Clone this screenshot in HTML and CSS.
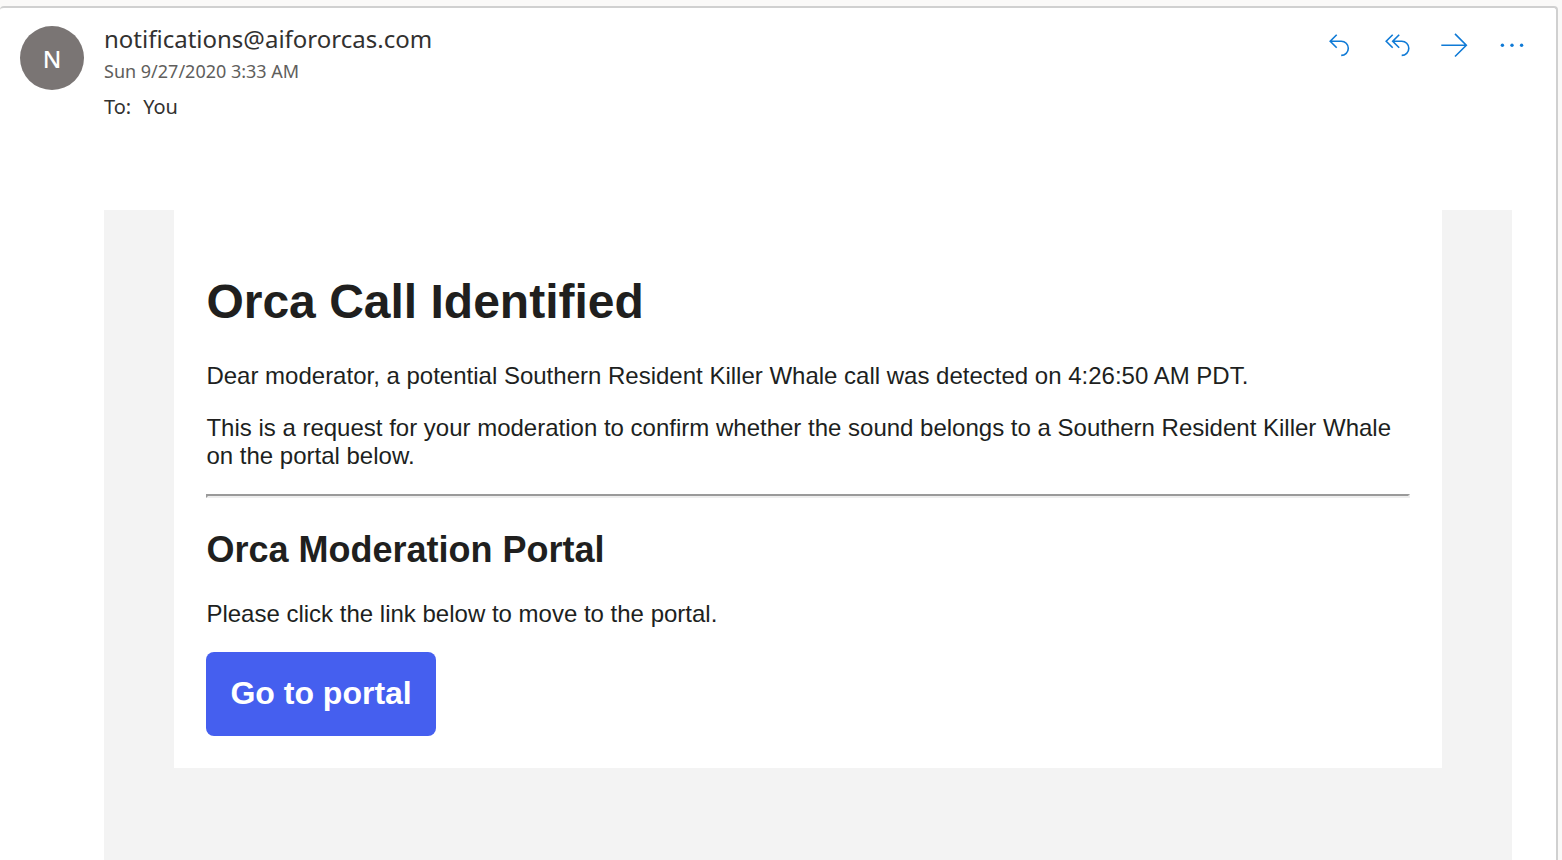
FILE: index.html
```html
<!DOCTYPE html>
<html lang="en">
<head>
<meta charset="utf-8">
<meta name="viewport" content="width=device-width, initial-scale=1">
<title>Orca Call Identified</title>
<link rel="stylesheet" href="styles.css">
</head>
<body>
<main class="message">
  <header class="message-header">
    <div class="avatar" aria-hidden="true">N</div>
    <div class="sender">
      <div class="sender-address">notifications@aifororcas.com</div>
      <time class="sent-date" datetime="2020-09-27T03:33">Sun 9/27/2020 3:33 AM</time>
      <div class="recipients"><span>To:</span><span>You</span></div>
    </div>
    <div class="actions">
      <button class="action" type="button" aria-label="Reply">
        <svg viewBox="0 0 32 32"><path d="M14.7 5.7 8.2 12.2l6.5 6.5M8.2 12.2h11a7.1 7.1 0 0 1 0 14.2"/></svg>
      </button>
      <button class="action" type="button" aria-label="Reply all">
        <svg viewBox="0 0 32 32"><path d="M12.7 5.7 6.2 12.2l6.5 6.5M19.2 5.7l-6.5 6.5 6.5 6.5M12.7 12.2h9a7.1 7.1 0 0 1 0 14.2"/></svg>
      </button>
      <button class="action" type="button" aria-label="Forward">
        <svg viewBox="0 0 32 32"><path d="M3.3 16.2h25M17 4.9 28.3 16.2 17 27.5"/></svg>
      </button>
      <button class="action" type="button" aria-label="More actions">
        <svg viewBox="0 0 32 32"><g class="dots"><circle cx="6.4" cy="16.2" r="1.7"/><circle cx="16" cy="16.2" r="1.7"/><circle cx="25.6" cy="16.2" r="1.7"/></g></svg>
      </button>
    </div>
  </header>
  <div class="mail-body">
    <article class="card">
      <h1>Orca Call Identified</h1>
      <p>Dear moderator, a potential Southern Resident Killer Whale call was detected on 4:26:50 AM PDT.</p>
      <p>This is a request for your moderation to confirm whether the sound belongs to a Southern Resident Killer Whale on the portal below.</p>
      <hr>
      <h2>Orca Moderation Portal</h2>
      <p>Please click the link below to move to the portal.</p>
      <a class="portal-link" href="#portal">Go to portal</a>
    </article>
  </div>
</main>
</body>
</html>
```
FILE: styles.css
```css
* {
  box-sizing: border-box;
}

body {
  margin: 0;
  min-height: 100vh;
  display: flex;
  flex-direction: column;
  padding: 6px 4px 0 0;
  background: #faf9f8;
  color: #201f1e;
  font-family: "Liberation Sans", Arial, sans-serif;
  font-size: 24px;
  line-height: 28px;
}

.message {
  flex: 1;
  display: flex;
  flex-direction: column;
  gap: 88px;
  padding: 16px 44px 0 20px;
  background: #fff;
  border: solid #d0d0d0;
  border-width: 2px 2px 0 0;
  border-radius: 4px 4px 0 0;
}

.message-header {
  display: flex;
  align-items: flex-start;
  gap: 20px;
  font-family: "Noto Sans", sans-serif;
}

.avatar {
  flex: none;
  width: 64px;
  height: 64px;
  margin-top: 2px;
  border-radius: 50%;
  background: #7a7574;
  color: #fff;
  font-size: 24px;
  font-weight: 500;
  line-height: 66px;
  text-align: center;
}

.sender {
  flex: 1;
  display: flex;
  flex-direction: column;
}

.sender-address {
  color: #323130;
  font-size: 24px;
  line-height: 30px;
}

.sent-date {
  color: #605e5c;
  font-size: 18px;
  line-height: 34px;
}

.recipients {
  display: flex;
  gap: 12px;
  padding-top: 4px;
  color: #323130;
  font-size: 20px;
  line-height: 30px;
}

.actions {
  display: flex;
  gap: 26px;
  padding-top: 5px;
  margin-right: -16px;
}

.action {
  width: 32px;
  height: 32px;
  padding: 0;
  border: 0;
  background: none;
  color: #0f7ad6;
}

.action svg {
  display: block;
  width: 32px;
  height: 32px;
  fill: none;
  stroke: currentColor;
  stroke-width: 1.6;
}

.action .dots {
  fill: currentColor;
  stroke: none;
}

.mail-body {
  flex: 1;
  margin-left: 84px;
  background: #f3f3f3;
}

.card {
  width: 90%;
  margin: 0 auto;
  padding: 64px 32px 32px;
  background: #fff;
}

h1,
h2 {
  margin: 0;
  font-weight: 700;
}

h1 {
  margin-bottom: 32px;
  font-size: 48px;
  line-height: 56px;
}

h2 {
  margin: 30px 0 28px;
  font-size: 36px;
  line-height: 44px;
}

p {
  margin: 0 0 24px;
}

hr {
  margin: 0;
  border: 2px solid;
  border-color: #9a9a9a #eee #eee #9a9a9a;
}

.portal-link {
  display: inline-block;
  padding: 23px 24px 25px;
  border-radius: 8px;
  background: #455fef;
  color: #fff;
  font-size: 32px;
  font-weight: 700;
  line-height: 36px;
  text-decoration: none;
  vertical-align: top;
}
```
